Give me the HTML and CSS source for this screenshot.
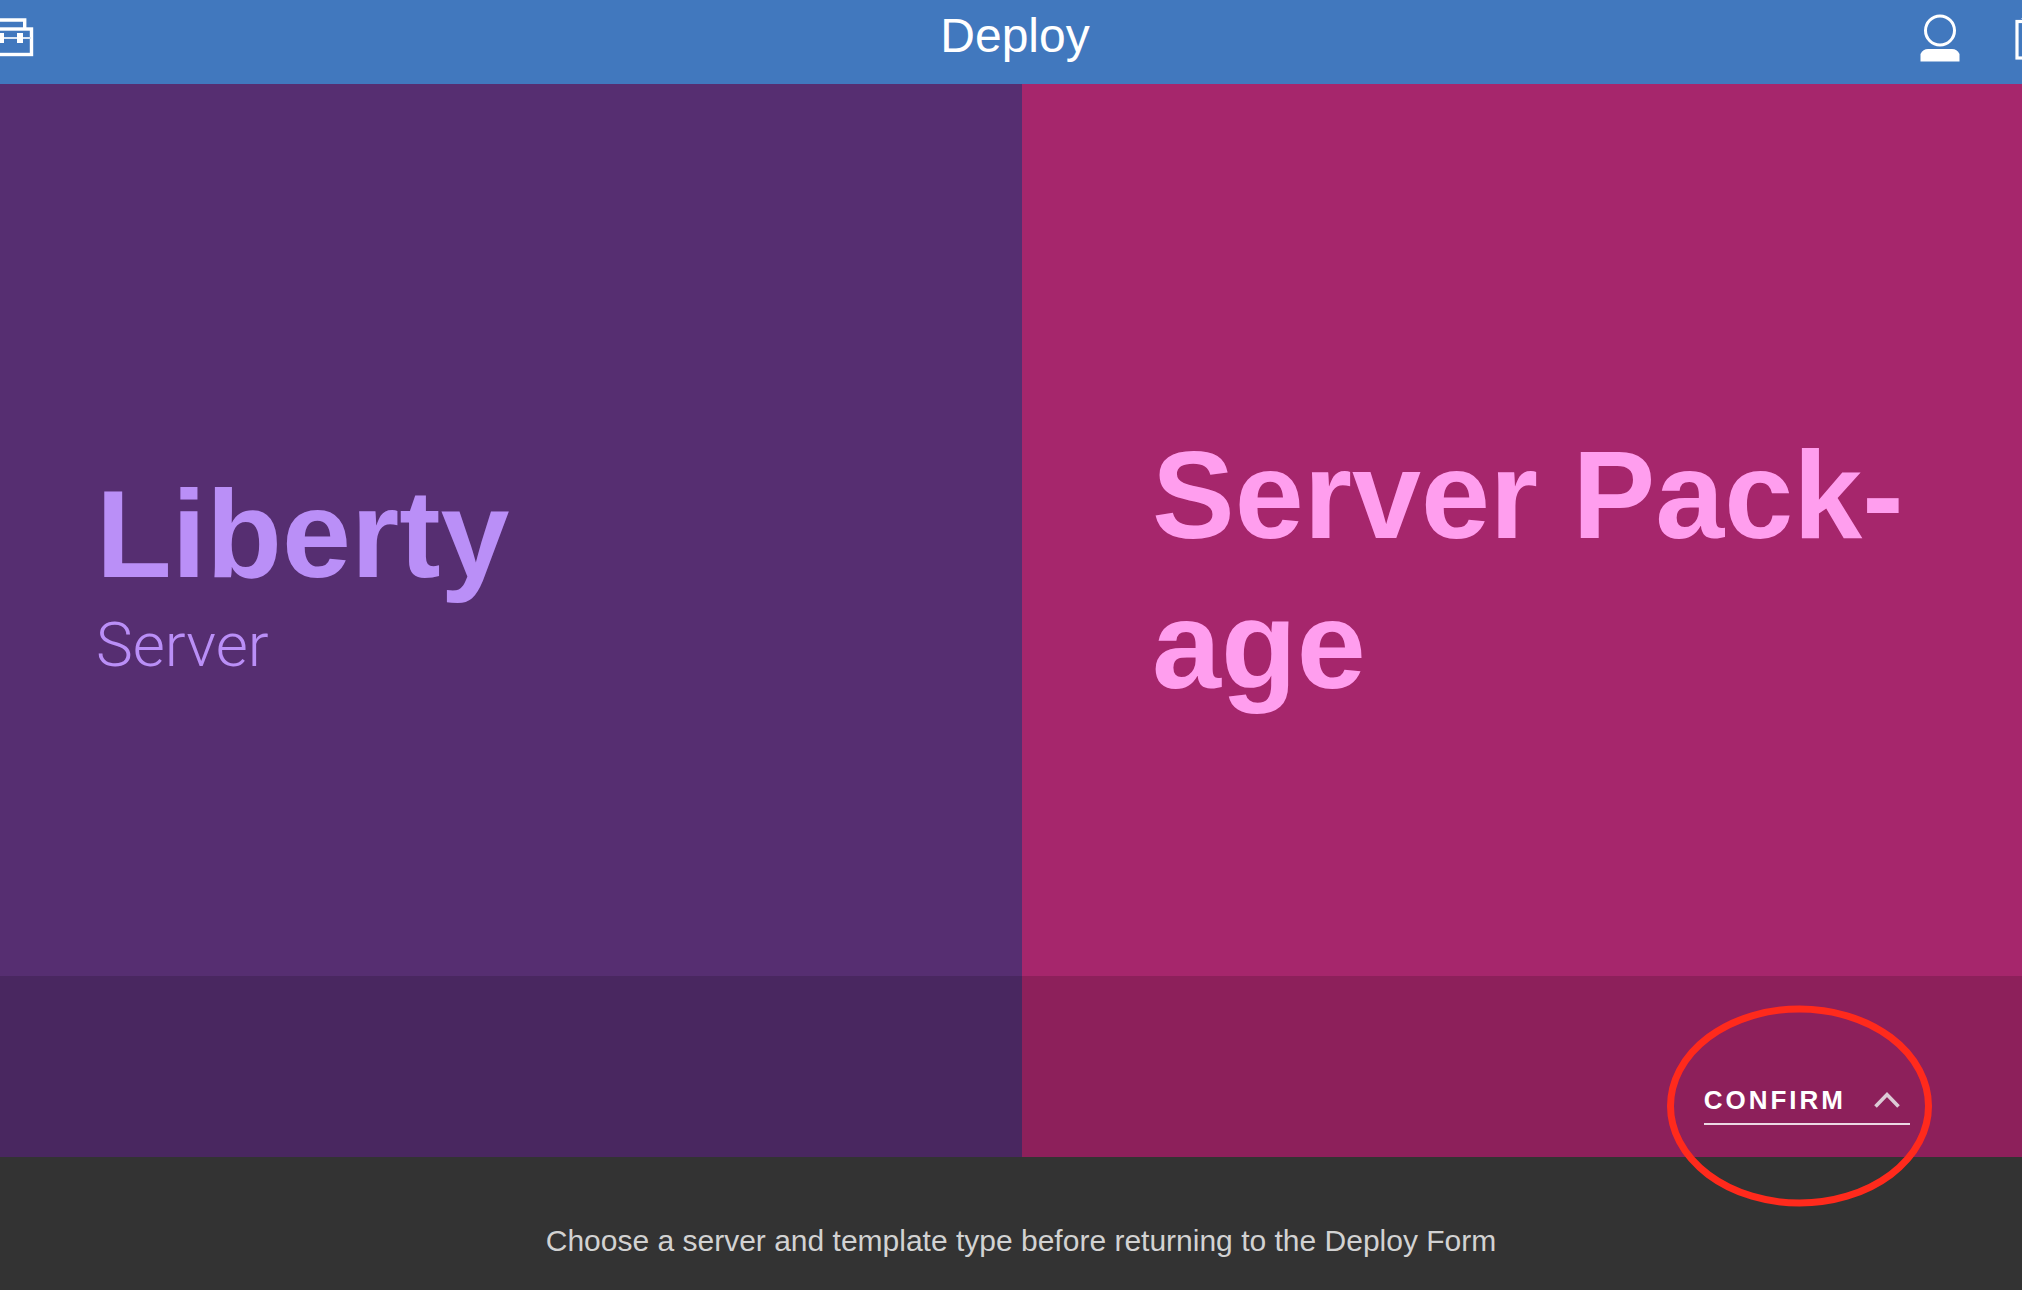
FILE: index.html
```html
<!DOCTYPE html>
<html lang="en">
<head>
  <meta charset="utf-8">
  <meta name="viewport" content="width=device-width, initial-scale=1">
  <title>Deploy</title>
  <link rel="stylesheet" href="styles.css">
</head>
<body>
  <header class="topbar">
    <button class="icon-button" type="button" aria-label="Toolbox">
      <svg width="60" height="84" viewBox="0 0 60 84" fill="none" stroke="#fff" stroke-width="3.4" aria-hidden="true">
        <path d="M20 28V20H48.7V28"/>
        <rect x="13" y="29" width="42.5" height="25.5"/>
        <path d="M14 38H55" stroke-width="2" stroke="#dbe6f4"/>
        <path d="M23 33H28V43H23ZM41 33H47V43H41Z" fill="#fff" stroke="none"/>
      </svg>
    </button>
    <h1 class="topbar-title">Deploy</h1>
    <div class="topbar-actions">
      <button class="icon-button" type="button" aria-label="Account">
        <svg width="40" height="84" viewBox="0 0 40 84" aria-hidden="true">
          <circle cx="20" cy="30.5" r="14.5" fill="none" stroke="#fff" stroke-width="3"/>
          <path d="M0.5 61.5V54Q3 49 8 49H32Q37 49 39.5 54V61.5Z" fill="#fff"/>
        </svg>
      </button>
      <button class="icon-button" type="button" aria-label="Window">
        <svg width="39" height="84" viewBox="0 0 39 84" fill="none" stroke="#fff" stroke-width="3.2" aria-hidden="true">
          <rect x="2" y="21.5" width="35" height="36.5"/>
          <path d="M6 18.5H12" stroke-width="1" opacity=".4"/>
        </svg>
      </button>
    </div>
  </header>

  <main class="panels">
    <section class="panel panel-server">
      <div class="panel-body">
        <h2 class="panel-title">Liberty</h2>
        <p class="panel-subtitle">Server</p>
      </div>
      <div class="panel-strip"></div>
    </section>
    <section class="panel panel-package">
      <div class="panel-body">
        <h2 class="panel-title">Server Pack&shy;age</h2>
      </div>
      <div class="panel-strip">
        <button class="confirm" type="button">
          <span>Confirm</span>
          <svg width="26" height="18" viewBox="0 0 26 18" fill="none" stroke="#dccbd6" stroke-width="3.6" aria-hidden="true">
            <path d="M1.5 15.5L13 3.5L24.5 15.5"/>
          </svg>
          <svg class="confirm-ring" viewBox="0 0 265 202" fill="none" stroke="#ff2a1c" stroke-width="7" aria-hidden="true">
            <ellipse cx="132.5" cy="101" rx="129" ry="97"/>
          </svg>
        </button>
      </div>
    </section>
  </main>

  <footer class="hint">
    <p>Choose a server and template type before returning to the Deploy Form</p>
  </footer>
</body>
</html>
```
FILE: styles.css
```css
* {
  box-sizing: border-box;
}

body {
  margin: 0;
  min-height: 100vh;
  display: flex;
  flex-direction: column;
  overflow-x: hidden;
  background: #333;
  font-family: "Liberation Sans", Arial, sans-serif;
}

h1,
h2,
p {
  margin: 0;
}

button {
  padding: 0;
  border: 0;
  background: none;
  color: inherit;
  font: inherit;
  cursor: pointer;
}

svg {
  display: block;
}

/* The bar runs past both window edges, so its outer icons are cut. */
.topbar {
  display: grid;
  grid-template-columns: 1fr auto 1fr;
  height: 84px;
  margin: 0 -32px 0 -24px;
  background: #4178be;
  color: #fff;
}

.icon-button {
  justify-self: start;
}

.topbar-title {
  font-size: 48px;
  font-weight: 400;
  line-height: 72px;
}

.topbar-actions {
  display: flex;
  justify-content: flex-end;
  gap: 55px;
}

.panels {
  flex: 1;
  display: grid;
  grid-template-columns: 1022fr 1000fr;
}

.panel {
  display: flex;
  flex-direction: column;
}

.panel-server {
  background: #562e71;
  color: #ba8ff7;
}

.panel-package {
  background: #a6266c;
  color: #ff9eee;
}

.panel-body {
  flex: 1;
  display: flex;
  flex-direction: column;
  justify-content: center;
  padding: 80px 96px 0;
}

.panel-package .panel-body {
  padding-left: 130px;
}

.panel-title {
  font-size: 124px;
  font-weight: 700;
  line-height: 150px;
}

.panel-subtitle {
  font-family: Roboto, sans-serif;
  font-size: 62px;
  font-weight: 300;
  line-height: 72px;
}

.panel-strip {
  display: flex;
  justify-content: flex-end;
  align-items: flex-end;
  height: 181px;
  padding: 0 112px 32px;
  background: rgba(0, 0, 0, 0.15);
}

.confirm {
  position: relative;
  display: flex;
  align-items: center;
  gap: 28px;
  padding: 0 10px 8px 0;
  border-bottom: 2px solid #ecd9e4;
  color: #fff;
  font-size: 26px;
  font-weight: 700;
  line-height: 30px;
  letter-spacing: 3px;
  text-transform: uppercase;
}

/* Ring drawn over the button and the edge of the footer. */
.confirm-ring {
  position: absolute;
  top: -80px;
  left: -37px;
  width: 265px;
  height: 202px;
  pointer-events: none;
}

.hint {
  padding: 66px 24px 31px 44px;
  color: #d2d2d2;
  font-size: 30px;
  line-height: 36px;
  text-align: center;
}
```
